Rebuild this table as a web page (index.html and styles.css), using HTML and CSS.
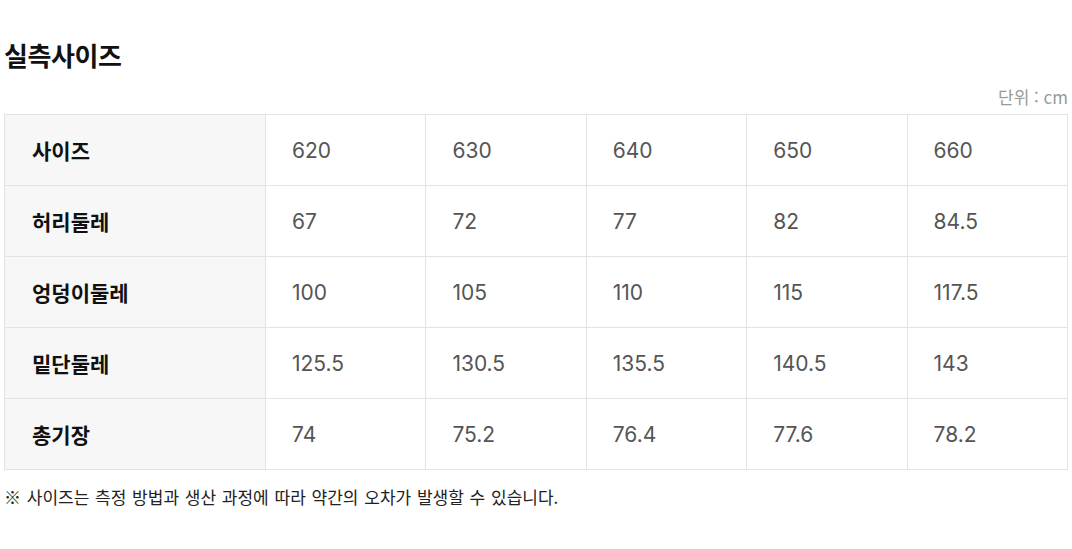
FILE: index.html
```html
<!DOCTYPE html>
<html lang="ko">
<head>
<meta charset="utf-8">
<link rel="stylesheet" href="styles.css">
</head>
<body>
<div class="page">
  <h2 class="title">실측사이즈</h2>
  <div class="unit">단위 : cm</div>
  <table class="size-table">
    <colgroup>
      <col class="col-head">
      <col><col><col><col><col>
    </colgroup>
    <tbody>
      <tr><th>사이즈</th><td>620</td><td>630</td><td>640</td><td>650</td><td>660</td></tr>
      <tr><th>허리둘레</th><td>67</td><td>72</td><td>77</td><td>82</td><td>84.5</td></tr>
      <tr><th>엉덩이둘레</th><td>100</td><td>105</td><td>110</td><td>115</td><td>117.5</td></tr>
      <tr><th>밑단둘레</th><td>125.5</td><td>130.5</td><td>135.5</td><td>140.5</td><td>143</td></tr>
      <tr><th>총기장</th><td>74</td><td>75.2</td><td>76.4</td><td>77.6</td><td>78.2</td></tr>
    </tbody>
  </table>
  <p class="note">※ 사이즈는 측정 방법과 생산 과정에 따라 약간의 오차가 발생할 수 있습니다.</p>
</div>
</body>
</html>
```

FILE: styles.css
```css
html, body {
  margin: 0;
  padding: 0;
  background: #ffffff;
}
body {
  font-family: "Noto Sans CJK KR", "Noto Sans", sans-serif;
  color: #111;
}
.page {
  padding: 0 4px;
}
.title {
  margin: 0;
  padding-top: 37px;
  font-size: 26px;
  line-height: 36px;
  font-weight: 700;
  color: #111;
  letter-spacing: -0.4px;
}
.unit {
  margin-top: 12px;
  text-align: right;
  font-size: 17px;
  line-height: 24px;
  color: #999;
}
.size-table {
  margin-top: 5px;
  width: 100%;
  border-collapse: collapse;
  table-layout: fixed;
}
.col-head {
  width: 261px;
}
.size-table th,
.size-table td {
  border: 1px solid #e3e3e3;
  height: 71px;
  padding: 0;
  box-sizing: border-box;
  text-align: left;
  vertical-align: middle;
}
.size-table th {
  background: #f7f7f7;
  padding-left: 27px;
  font-size: 21px;
  font-weight: 700;
  color: #111;
}
.size-table td {
  padding-left: 26px;
  font-family: "Inter", "Noto Sans CJK KR", sans-serif;
  font-size: 21px;
  color: #555;
}
.note {
  margin: 15px 0 0;
  font-size: 17px;
  line-height: 24px;
  word-spacing: 1px;
  color: #222;
}
```
